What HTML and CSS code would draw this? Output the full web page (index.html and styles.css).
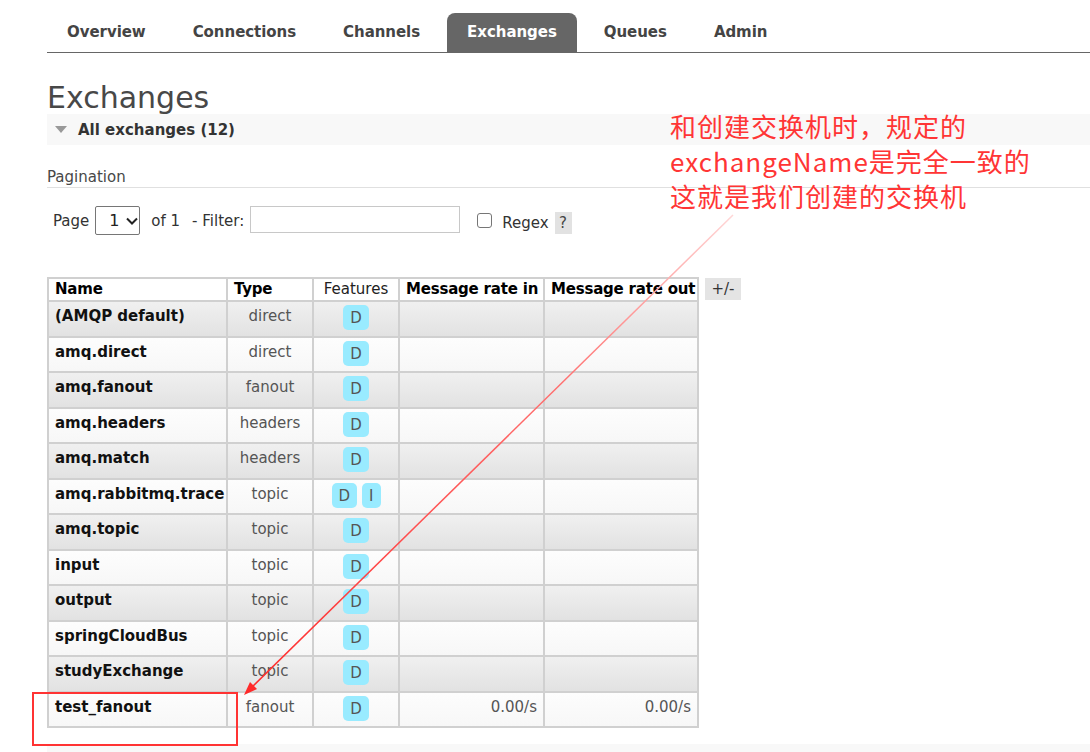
FILE: index.html
```html
<!DOCTYPE html>
<html lang="en">
<head>
<meta charset="utf-8">
<title>Exchanges</title>
<link rel="stylesheet" href="styles.css">
</head>
<body>
<div class="page">
  <nav class="tabs">
    <a class="tab">Overview</a>
    <a class="tab">Connections</a>
    <a class="tab">Channels</a>
    <a class="tab active">Exchanges</a>
    <a class="tab">Queues</a>
    <a class="tab">Admin</a>
  </nav>

  <h1 class="title">Exchanges</h1>

  <div class="section-head"><span class="tri"></span><span>All exchanges (12)</span></div>

  <div class="pag-label">Pagination</div>

  <div class="filter-row">
    <span class="lbl">Page</span>
    <span class="sel"><span class="sel-val">1</span><svg class="chev" width="12" height="8" viewBox="0 0 12 8"><path d="M1 1.5 L6 6.5 L11 1.5" fill="none" stroke="#222" stroke-width="2"/></svg></span>
    <span class="lbl of">of 1</span>
    <span class="lbl flt">- Filter:</span>
    <input class="filter-input" type="text">
    <span class="chk"></span>
    <span class="lbl regex">Regex</span>
    <span class="help">?</span>
  </div>

  <div class="table-wrap">
    <table class="list">
      <colgroup>
        <col class="c-name">
        <col class="c-type">
        <col class="c-feat">
        <col class="c-in">
        <col class="c-out">
      </colgroup>
      <thead>
        <tr>
          <th>Name</th>
          <th>Type</th>
          <th class="feat-h">Features</th>
          <th>Message rate in</th>
          <th>Message rate out</th>
        </tr>
      </thead>
      <tbody>
        <tr class="alt1"><td class="name">(AMQP default)</td><td class="type">direct</td><td class="feat"><span class="badge">D</span></td><td></td><td></td></tr>
        <tr class="alt2"><td class="name">amq.direct</td><td class="type">direct</td><td class="feat"><span class="badge">D</span></td><td></td><td></td></tr>
        <tr class="alt1"><td class="name">amq.fanout</td><td class="type">fanout</td><td class="feat"><span class="badge">D</span></td><td></td><td></td></tr>
        <tr class="alt2"><td class="name">amq.headers</td><td class="type">headers</td><td class="feat"><span class="badge">D</span></td><td></td><td></td></tr>
        <tr class="alt1"><td class="name">amq.match</td><td class="type">headers</td><td class="feat"><span class="badge">D</span></td><td></td><td></td></tr>
        <tr class="alt2"><td class="name">amq.rabbitmq.trace</td><td class="type">topic</td><td class="feat"><span class="badge">D</span><span class="badge">I</span></td><td></td><td></td></tr>
        <tr class="alt1"><td class="name">amq.topic</td><td class="type">topic</td><td class="feat"><span class="badge">D</span></td><td></td><td></td></tr>
        <tr class="alt2"><td class="name">input</td><td class="type">topic</td><td class="feat"><span class="badge">D</span></td><td></td><td></td></tr>
        <tr class="alt1"><td class="name">output</td><td class="type">topic</td><td class="feat"><span class="badge">D</span></td><td></td><td></td></tr>
        <tr class="alt2"><td class="name">springCloudBus</td><td class="type">topic</td><td class="feat"><span class="badge">D</span></td><td></td><td></td></tr>
        <tr class="alt1"><td class="name">studyExchange</td><td class="type">topic</td><td class="feat"><span class="badge">D</span></td><td></td><td></td></tr>
        <tr class="alt2"><td class="name">test_fanout</td><td class="type">fanout</td><td class="feat"><span class="badge">D</span></td><td class="rate">0.00/s</td><td class="rate">0.00/s</td></tr>
      </tbody>
    </table>
    <span class="plusminus">+/-</span>
  </div>

  <div class="next-section"></div>
</div>

<div class="note">
  <div>和创建交换机时，规定的</div>
  <div>exchangeName是完全一致的</div>
  <div>这就是我们创建的交换机</div>
</div>

<svg class="overlay" width="1090" height="752" viewBox="0 0 1090 752">
  <defs>
    <linearGradient id="lg" x1="733" y1="215" x2="244" y2="695" gradientUnits="userSpaceOnUse">
      <stop offset="0" stop-color="#ffd6d6"/>
      <stop offset="0.35" stop-color="#ff7070"/>
      <stop offset="1" stop-color="#ff2a2a"/>
    </linearGradient>
  </defs>
  <line x1="733" y1="215" x2="250" y2="689" stroke="url(#lg)" stroke-width="1.5"/>
  <polygon points="244,695 257,689 250,682" fill="#ff2a2a"/>
  <rect x="33" y="693" width="204" height="52" fill="none" stroke="#ff3333" stroke-width="2"/>
</svg>
</body>
</html>
```

FILE: styles.css
```css
html, body {
  margin: 0;
  padding: 0;
  background: #fff;
}

body {
  width: 1090px;
  height: 752px;
  overflow: hidden;
  position: relative;
  font-family: "DejaVu Sans", Verdana, sans-serif;
  font-size: 15px;
  color: #484848;
}

.page {
  padding-left: 47px;
}

/* nav tabs */
.tabs {
  display: flex;
  gap: 7px;
  padding-top: 13px;
  border-bottom: 1px solid #666;
}

.tab {
  display: block;
  padding: 0 20px;
  line-height: 39px;
  font-weight: bold;
  font-size: 15px;
  letter-spacing: -0.05px;
  color: #444;
  border-radius: 8px 8px 0 0;
}

.tab.active {
  background: #666;
  color: #fff;
}

/* heading */
.title {
  margin: 29px 0 0 0;
  font-size: 30px;
  line-height: 32px;
  font-weight: normal;
  color: #484848;
}

.section-head {
  display: flex;
  align-items: center;
  height: 31px;
  background: #f8f8f8;
  font-weight: bold;
  color: #333;
}

.tri {
  width: 0;
  height: 0;
  margin-left: 8px;
  margin-right: 11px;
  border-left: 6.5px solid transparent;
  border-right: 6.5px solid transparent;
  border-top: 7px solid #999;
}

.pag-label {
  margin-top: 22px;
  line-height: 20px;
  border-bottom: 1px solid #e0e0e0;
  color: #484848;
}

/* filter row */
.filter-row {
  display: flex;
  align-items: center;
  height: 29px;
  margin-top: 18px;
  padding-left: 6px;
  color: #333;
}

.sel {
  display: flex;
  align-items: center;
  box-sizing: border-box;
  flex: none;
  width: 45px;
  height: 29px;
  margin-left: 6px;
  padding: 0 0 0 13px;
  border: 1px solid #767676;
  border-radius: 2px;
  color: #222;
  font-size: 16px;
}

.chev {
  margin-left: 6px;
}

.lbl.of {
  margin-left: 11px;
}

.lbl.flt {
  margin-left: 12px;
}

.filter-input {
  box-sizing: border-box;
  width: 210px;
  height: 27px;
  margin: 0 0 2px 6px;
  border: 1px solid #c8c8c8;
  padding: 0 4px;
  font: inherit;
}

.chk {
  display: block;
  box-sizing: border-box;
  width: 15px;
  height: 15px;
  margin-left: 17px;
  margin-top: -1px;
  border: 1px solid #767676;
  border-radius: 3px;
  background: #fff;
}

.lbl.regex {
  margin-left: 10px;
  margin-top: 4px;
}

.help {
  display: block;
  width: 17px;
  height: 22px;
  line-height: 22px;
  margin-left: 6px;
  margin-top: 4px;
  text-align: center;
  background: #e2e2e2;
  color: #444;
}

/* table */
.table-wrap {
  display: flex;
  align-items: flex-start;
  gap: 6px;
  margin-top: 42px;
}

.list {
  table-layout: fixed;
  width: 650px;
  border-collapse: collapse;
  border: 2px solid #cfcfcf;
}

.c-name { width: 179px; }
.c-type { width: 86px; }
.c-feat { width: 86px; }
.c-in { width: 145px; }
.c-out { width: 154px; }

.list th,
.list td {
  border: 2px solid #d0d0d0;
  padding: 0 6px;
  text-align: left;
  vertical-align: top;
}

.list th {
  height: 21px;
  line-height: 21px;
  background: #fff;
  color: #000;
  font-weight: bold;
  white-space: nowrap;
  letter-spacing: -0.2px;
  overflow: hidden;
}

.list th.feat-h {
  font-weight: normal;
  color: #222;
  text-align: center;
  letter-spacing: 0;
}

.list td {
  height: 35.5px;
  padding-top: 4px;
  padding-bottom: 0;
  box-sizing: border-box;
  line-height: 20px;
}

.list tr.alt1 td {
  background: linear-gradient(#f0f0f0, #e2e2e2);
}

.list tr.alt2 td {
  background: linear-gradient(#fdfdfd, #f7f7f7);
}

.list td.name {
  font-weight: bold;
  color: #111;
  white-space: nowrap;
}

.list td.type {
  text-align: center;
  color: #555;
}

.list td.feat {
  text-align: center;
  padding-top: 3px;
  white-space: nowrap;
}

.badge {
  display: inline-block;
  padding: 0 7px;
  height: 25px;
  line-height: 27px;
  border-radius: 5px;
  background: #99ebff;
  color: #555;
  vertical-align: top;
}

.badge + .badge {
  margin-left: 5px;
}

.list td.rate {
  text-align: right;
  color: #555;
}

.plusminus {
  display: block;
  width: 36px;
  height: 22px;
  line-height: 22px;
  margin-top: 1px;
  text-align: center;
  background: #e4e4e4;
  color: #333;
}

.next-section {
  margin-top: 16px;
  height: 20px;
  background: #f8f8f8;
}

/* annotation */
.note {
  position: absolute;
  left: 670px;
  top: 108px;
  font-family: "Noto Sans CJK SC", "Microsoft YaHei", sans-serif;
  font-size: 26px;
  line-height: 35px;
  color: #ff3535;
  letter-spacing: 1px;
}

.overlay {
  position: absolute;
  left: 0;
  top: 0;
  pointer-events: none;
}
```
